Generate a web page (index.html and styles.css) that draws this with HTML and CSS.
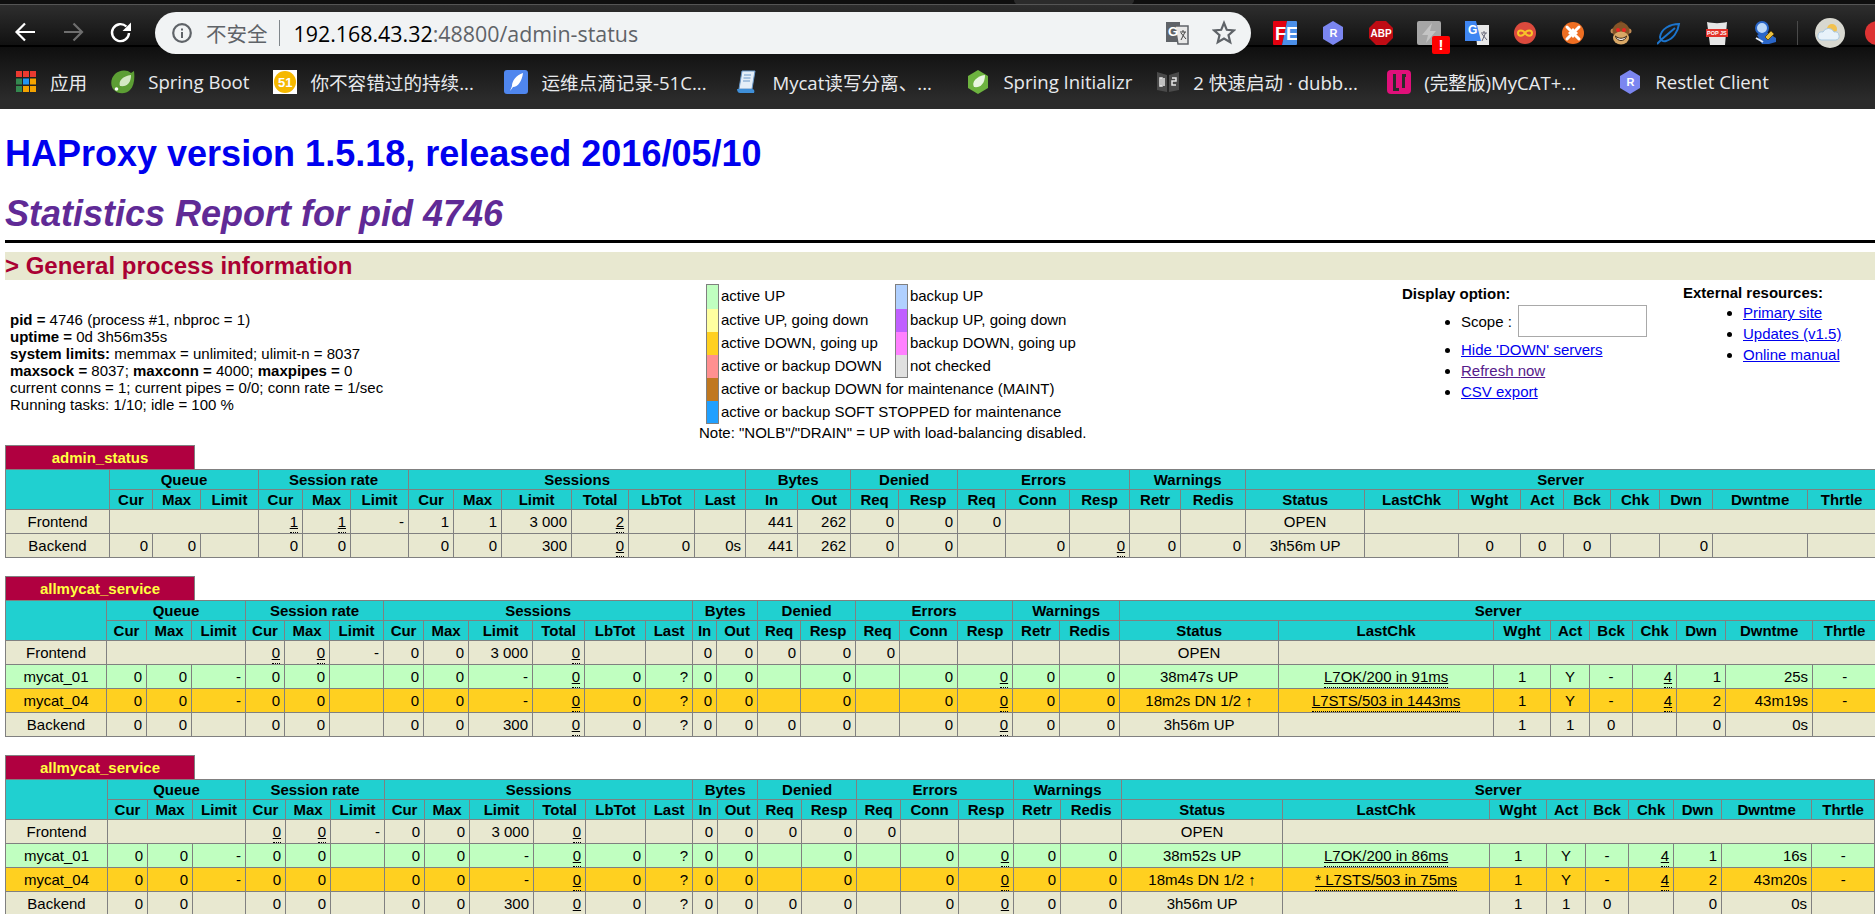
FILE: index.html
```html
<!DOCTYPE html>
<html lang="zh">
<head>
<meta charset="utf-8">
<title>Statistics Report for HAProxy</title>
<link rel="stylesheet" href="styles.css">
</head>
<body>
<header class="chrome">
  <div class="tabstrip"><span class="tabshape"></span></div>
  <div class="toolbar">
    <div class="nav">
      <svg class="navicon" viewBox="0 0 24 24"><path d="M22 12H4M12 3.500L3.500 12l8.500 8.500" fill="none" stroke="#fff" stroke-width="2.200"/></svg>
      <svg class="navicon" viewBox="0 0 24 24"><path d="M3 12h18M12.500 3.500L21 12l-8.500 8.500" fill="none" stroke="#6e6e6e" stroke-width="2.200"/></svg>
      <svg class="navicon" viewBox="0 0 24 24"><path d="M20 13a8.500 8.500 0 1 1-2.600-6.500" fill="none" stroke="#fff" stroke-width="2.400"/><path d="M22 2.500v8.500h-8.500z" fill="#fff"/></svg>
    </div>
    <div class="omnibox">
      <svg class="infoicon" viewBox="0 0 20 20"><circle cx="10" cy="10" r="8.800" fill="none" stroke="#5f6368" stroke-width="2.200"/><path d="M9 9h2v6H9zM9 5.500h2v2H9z" fill="#5f6368"/></svg>
      <span class="insecure">不安全</span>
      <span class="omnisep"></span>
      <span class="url"><b>192.168.43.32</b>:48800/admin-status</span>
      <span class="omnispace"></span>
      <svg class="omniicon" viewBox="0 0 24 26"><path d="M1 2h14v20H1z" fill="#5f6368"/><path d="M10 6h13v18H13z" fill="#e8e8e8" stroke="#5f6368" stroke-width="1.500"/><text x="3" y="16" class="gtext">G</text><path d="M15 12h6M18 10v2M16 20l4-8M16 13l5 6" stroke="#444" fill="none"/></svg>
      <svg class="omniicon star" viewBox="0 0 24 26"><path d="M12 3l2.800 6.800 7.200.6-5.500 4.800 1.700 7.100-6.200-3.800-6.200 3.800 1.700-7.100L2 10.400l7.200-.6z" fill="none" stroke="#5f6368" stroke-width="2.200"/></svg>
    </div>
    <div class="exts">
      <svg class="ext" viewBox="0 0 24 24"><path d="M1 0h13l-5 24H1a1 1 0 0 1-1-1V1a1 1 0 0 1 1-1z" fill="#e3000f"/><path d="M14 0h9a1 1 0 0 1 1 1v22a1 1 0 0 1-1 1H9z" fill="#4b8fe8"/><text x="2" y="18.500" class="fe">FE</text></svg>
      <svg class="ext" viewBox="0 0 24 24"><path d="M12 0l10 6v12l-10 6-10-6V6z" fill="#7b86f0"/><text x="8.500" y="16" class="extr">R</text></svg>
      <svg class="ext" viewBox="0 0 24 24"><path d="M7 0h10l7 7v10l-7 7H7l-7-7V7z" fill="#bf0c14"/><text x="1.500" y="16" class="abp">ABP</text></svg>
      <span class="extwrap">
        <svg class="ext" viewBox="0 0 24 24"><rect width="24" height="24" rx="2" fill="#a6a6a6"/><path d="M15 2L5 14h6l-2 8 10-12h-6z" fill="#c4c4c4"/></svg>
        <span class="extbadge">!</span>
      </span>
      <svg class="ext" viewBox="0 0 24 24"><path d="M10 4h14v20H12z" fill="#e8e8e8"/><path d="M0 0h11l5 20H0z" fill="#3f86f2"/><text x="3" y="13" class="gtext gsmall">G</text><path d="M16 12h6M19 10v2M17 20l3.500-8M17 13l5 6" stroke="#667" fill="none"/></svg>
      <svg class="ext" viewBox="0 0 24 24"><circle cx="12" cy="12" r="11" fill="#dc4a3d"/><path d="M12 12c-2-3.500-7-3.500-7 0s5 3.500 7 0c2-3.500 7-3.500 7 0s-5 3.500-7 0z" fill="none" stroke="#f8c32a" stroke-width="2"/></svg>
      <svg class="ext" viewBox="0 0 24 24"><circle cx="12" cy="12" r="11" fill="#ee6e22"/><path d="M12 7l5 5-5 5-5-5z" fill="#fff"/><path d="M6 6l3 3M18 6l-3 3M6 18l3-3M18 18l-3-3" stroke="#fff" stroke-width="3" stroke-linecap="round"/></svg>
      <svg class="ext" viewBox="0 0 24 24"><circle cx="4" cy="10" r="2.500" fill="#c08a55"/><circle cx="20" cy="10" r="2.500" fill="#c08a55"/><path d="M9 2l3-2 3 2z" fill="#6a3f1c"/><circle cx="12" cy="10" r="8.500" fill="#855427"/><ellipse cx="12" cy="17" rx="8" ry="6.500" fill="#d9a866"/><circle cx="9" cy="9" r="2" fill="#e22"/><circle cx="15" cy="9" r="2" fill="#e22"/><path d="M6.500 15c3 3 8 3 11 0-1 6-10 6-11 0z" fill="#fff" stroke="#3a2410"/></svg>
      <svg class="ext" viewBox="0 0 24 24"><path d="M22 3C13 3 4 8 3 16c0 3 3 5 6 4 7-2 12-9 13-17zM0 23l5-5M5 18L18 7" fill="none" stroke="#1c74cc" stroke-width="2"/></svg>
      <svg class="ext" viewBox="0 0 24 24"><path d="M2 1c6 1.500 14 1.500 20 0l-2 23H5z" fill="#e6e6e6"/><path d="M1 8h22v8H1z" fill="#e2332b"/><text x="2" y="14" class="popjs">POP JS</text></svg>
      <svg class="ext" viewBox="0 0 24 24"><path d="M4 14l8-4 11 7v4l-7 2H9z" fill="#2a66c8"/><circle cx="9" cy="7" r="6" fill="#bcd8f8" stroke="#2a66c8" stroke-width="2"/><path d="M12 16l6-6 3 3-6 6z" fill="#e8c040" stroke="#6a5010"/><path d="M3 17l7 4" stroke="#e8f0fa" stroke-width="2"/></svg>
      <span class="extsep"></span>
      <svg class="avatar" viewBox="0 0 30 30"><circle cx="15" cy="15" r="15" fill="#d8d8d0"/><circle cx="17" cy="11" r="5" fill="#f2c14e"/><path d="M6 22a4 4 0 0 1 2-8 6 6 0 0 1 11 0 4 4 0 0 1 2 8z" fill="#e8f2fa" stroke="#a8c8e0"/></svg>
      <svg class="ext lastext" viewBox="0 0 24 24"><circle cx="12" cy="12" r="12" fill="#d33"/><path d="M12 6v8M12 16v2" stroke="#fff" stroke-width="2"/></svg>
    </div>
  </div>
  <nav class="bookmarks">
    <a class="bm"><svg class="bmicon apps" viewBox="0 0 20 21"><g fill="#ea3a30"><rect width="6" height="6"/><rect x="7" width="6" height="6"/><rect x="14" width="6" height="6"/></g><rect y="7.500" width="6" height="6" fill="#34894f"/><rect x="7" y="7.500" width="6" height="6" fill="#2196f3"/><rect x="14" y="7.500" width="6" height="6" fill="#f4a300"/><rect y="15" width="6" height="6" fill="#34894f"/><rect x="7" y="15" width="6" height="6" fill="#f4a300"/><rect x="14" y="15" width="6" height="6" fill="#f4a300"/></svg>应用</a>
    <a class="bm"><svg class="bmicon" viewBox="0 0 24 24"><path d="M23 1c1 8 0 15-4 19-5 5-13 4-17-1C-1 14 0 8 4 4c4-4 12-5 16-1z" fill="#5c9e34"/><path d="M20 5c0 8-4 12-11 11-2-5 3-10 11-11z" fill="#d4e8c4"/><circle cx="5.500" cy="19" r="1.800" fill="#fff"/></svg>Spring Boot</a>
    <a class="bm fixed"><svg class="bmicon" viewBox="0 0 24 24"><rect width="24" height="24" fill="#fff"/><circle cx="12" cy="12" r="11" fill="#f5b800"/><text x="5" y="17" class="fifty">51</text></svg>你不容错过的持续...</a>
    <a class="bm fixed"><svg class="bmicon" viewBox="0 0 24 24"><rect width="24" height="24" rx="3" fill="#4f86ee"/><path d="M19 3c-7 2-11 8-11 13l-2 5 3-4c5 0 9-6 10-14z" fill="#fff"/></svg>运维点滴记录-51C...</a>
    <a class="bm fixed"><svg class="bmicon" viewBox="0 0 24 24"><path d="M7 1h13l-3 18H4z" fill="#e4eef8" stroke="#6a98c8"/><path d="M9 5h7M8.500 8h7M8 11h7" stroke="#6a98c8"/><path d="M2 19h15c2 0 3 2 2 4H5c-2 0-3-2-3-4z" fill="#3f8fd8"/></svg>Mycat读写分离、...</a>
    <a class="bm"><svg class="bmicon" viewBox="0 0 24 24"><path d="M12 0l10 6v12l-10 6-10-6V6z" fill="#6db33f"/><path d="M19 5c0 9-5 13-11 12-3-5 3-11 11-12z" fill="#e8f5e0"/></svg>Spring Initializr</a>
    <a class="bm fixed"><svg class="bmicon" viewBox="0 0 24 24"><path d="M1 2l10 3v17L1 20zM23 2L13 5v17l10-2z" fill="#4a4a4a"/><path d="M4 8h2v8H4zM8 8v8M16 8h4v3h-4v4h4" stroke="#e8e8e8" stroke-width="1.500" fill="none"/></svg>2 快速启动 · dubb...</a>
    <a class="bm fixed"><svg class="bmicon" viewBox="0 0 24 24"><rect width="24" height="24" rx="4" fill="#e0107a"/><path d="M6 4h3v14h3v3H6zM15 4h4v3h-1v11h-3z" fill="#2a2a2a"/></svg>(完整版)MyCAT+...</a>
    <a class="bm"><svg class="bmicon" viewBox="0 0 24 24"><path d="M12 0l10 6v12l-10 6-10-6V6z" fill="#7b86f0"/><text x="8.500" y="16" class="extr">R</text></svg>Restlet Client</a>
  </nav>
</header>

<main class="page">
  <h1>HAProxy version 1.5.18, released 2016/05/10</h1>
  <h2>Statistics Report for pid 4746</h2>
  <hr class="rule">
  <h3>&gt; General process information</h3>

  <section class="general">
    <p class="procinfo">
      <b>pid = </b>4746 (process #1, nbproc = 1)<br>
      <b>uptime = </b>0d 3h56m35s<br>
      <b>system limits:</b> memmax = unlimited; ulimit-n = 8037<br>
      <b>maxsock = </b>8037; <b>maxconn = </b>4000; <b>maxpipes = </b>0<br>
      current conns = 1; current pipes = 0/0; conn rate = 1/sec<br>
      Running tasks: 1/10; idle = 100 %
    </p>
    <div class="legendwrap">
      <table class="legend">
        <tr class="lg1"><td class="sw active4"></td><td class="lgt">active UP</td><td class="sw backup4"></td><td>backup UP</td></tr>
        <tr><td class="sw active3"></td><td class="lgt">active UP, going down</td><td class="sw backup3"></td><td>backup UP, going down</td></tr>
        <tr><td class="sw active2"></td><td class="lgt">active DOWN, going up</td><td class="sw backup2"></td><td>backup DOWN, going up</td></tr>
        <tr><td class="sw active0"></td><td class="lgt">active or backup DOWN</td><td class="sw nocheck"></td><td>not checked</td></tr>
        <tr><td class="sw maint"></td><td colspan="3">active or backup DOWN for maintenance (MAINT)</td></tr>
        <tr><td class="sw soft"></td><td colspan="3">active or backup SOFT STOPPED for maintenance</td></tr>
      </table>
      <p class="note">Note: "NOLB"/"DRAIN" = UP with load-balancing disabled.</p>
    </div>
    <div class="display">
      <b>Display option:</b>
      <ul>
        <li class="scope">Scope : <input class="scopein" type="text"></li>
        <li><a href="#">Hide 'DOWN' servers</a></li>
        <li><a href="#" class="visited">Refresh now</a></li>
        <li><a href="#">CSV export</a></li>
      </ul>
    </div>
    <div class="external">
      <b>External resources:</b>
      <ul>
        <li><a href="#">Primary site</a></li>
        <li><a href="#">Updates (v1.5)</a></li>
        <li><a href="#">Online manual</a></li>
      </ul>
    </div>
  </section>

  <div class="px">admin_status</div>
  <table class="stats">
    <colgroup><col width="104"><col width="43"><col width="48"><col width="58"><col width="44"><col width="48"><col width="58"><col width="45"><col width="48"><col width="70"><col width="57"><col width="66"><col width="51"><col width="52"><col width="53"><col width="48"><col width="59"><col width="48"><col width="64"><col width="60"><col width="51"><col width="65"><col width="119"><col width="94"><col width="62"><col width="43"><col width="47"><col width="49"><col width="53"><col width="95"><col width="68"></colgroup>
    <tr class="titre"><th rowspan="2"></th><th colspan="3">Queue</th><th colspan="3">Session rate</th><th colspan="6">Sessions</th><th colspan="2">Bytes</th><th colspan="2">Denied</th><th colspan="3">Errors</th><th colspan="2">Warnings</th><th colspan="9">Server</th></tr>
    <tr class="titre"><th>Cur</th><th>Max</th><th>Limit</th><th>Cur</th><th>Max</th><th>Limit</th><th>Cur</th><th>Max</th><th>Limit</th><th>Total</th><th>LbTot</th><th>Last</th><th>In</th><th>Out</th><th>Req</th><th>Resp</th><th>Req</th><th>Conn</th><th>Resp</th><th>Retr</th><th>Redis</th><th>Status</th><th>LastChk</th><th>Wght</th><th>Act</th><th>Bck</th><th>Chk</th><th>Dwn</th><th>Dwntme</th><th>Thrtle</th></tr>
    <tr class="frontend"><td class="ac">Frontend</td><td colspan="3"></td><td><u>1</u></td><td><u>1</u></td><td>-</td><td>1</td><td>1</td><td>3 000</td><td><u>2</u></td><td></td><td></td><td>441</td><td>262</td><td>0</td><td>0</td><td>0</td><td></td><td></td><td></td><td></td><td class="ac">OPEN</td><td colspan="8"></td></tr>
    <tr class="backend"><td class="ac">Backend</td><td>0</td><td>0</td><td></td><td>0</td><td>0</td><td></td><td>0</td><td>0</td><td>300</td><td><u>0</u></td><td>0</td><td>0s</td><td>441</td><td>262</td><td>0</td><td>0</td><td></td><td>0</td><td><u>0</u></td><td>0</td><td>0</td><td class="ac">3h56m UP</td><td></td><td class="ac">0</td><td class="ac">0</td><td class="ac">0</td><td></td><td>0</td><td></td><td></td></tr>
  </table>

  <div class="px">allmycat_service</div>
  <table class="stats">
    <colgroup><col width="101"><col width="40"><col width="45"><col width="54"><col width="39"><col width="45"><col width="54"><col width="40"><col width="45"><col width="64"><col width="52"><col width="61"><col width="47"><col width="24"><col width="41"><col width="43"><col width="55"><col width="44"><col width="58"><col width="55"><col width="47"><col width="60"><col width="159"><col width="215"><col width="57"><col width="39"><col width="43"><col width="44"><col width="49"><col width="87"><col width="64"></colgroup>
    <tr class="titre"><th rowspan="2"></th><th colspan="3">Queue</th><th colspan="3">Session rate</th><th colspan="6">Sessions</th><th colspan="2">Bytes</th><th colspan="2">Denied</th><th colspan="3">Errors</th><th colspan="2">Warnings</th><th colspan="9">Server</th></tr>
    <tr class="titre"><th>Cur</th><th>Max</th><th>Limit</th><th>Cur</th><th>Max</th><th>Limit</th><th>Cur</th><th>Max</th><th>Limit</th><th>Total</th><th>LbTot</th><th>Last</th><th>In</th><th>Out</th><th>Req</th><th>Resp</th><th>Req</th><th>Conn</th><th>Resp</th><th>Retr</th><th>Redis</th><th>Status</th><th>LastChk</th><th>Wght</th><th>Act</th><th>Bck</th><th>Chk</th><th>Dwn</th><th>Dwntme</th><th>Thrtle</th></tr>
    <tr class="frontend"><td class="ac">Frontend</td><td colspan="3"></td><td><u>0</u></td><td><u>0</u></td><td>-</td><td>0</td><td>0</td><td>3 000</td><td><u>0</u></td><td></td><td></td><td>0</td><td>0</td><td>0</td><td>0</td><td>0</td><td></td><td></td><td></td><td></td><td class="ac">OPEN</td><td colspan="8"></td></tr>
    <tr class="active4"><td class="ac">mycat_01</td><td>0</td><td>0</td><td>-</td><td>0</td><td>0</td><td></td><td>0</td><td>0</td><td>-</td><td><u>0</u></td><td>0</td><td>?</td><td>0</td><td>0</td><td></td><td>0</td><td></td><td>0</td><td><u>0</u></td><td>0</td><td>0</td><td class="ac">38m47s UP</td><td class="ac"><u>L7OK/200 in 91ms</u></td><td class="ac">1</td><td class="ac">Y</td><td class="ac">-</td><td><u>4</u></td><td>1</td><td>25s</td><td class="ac">-</td></tr>
    <tr class="active2"><td class="ac">mycat_04</td><td>0</td><td>0</td><td>-</td><td>0</td><td>0</td><td></td><td>0</td><td>0</td><td>-</td><td><u>0</u></td><td>0</td><td>?</td><td>0</td><td>0</td><td></td><td>0</td><td></td><td>0</td><td><u>0</u></td><td>0</td><td>0</td><td class="ac">18m2s DN 1/2 ↑</td><td class="ac"><u>L7STS/503 in 1443ms</u></td><td class="ac">1</td><td class="ac">Y</td><td class="ac">-</td><td><u>4</u></td><td>2</td><td>43m19s</td><td class="ac">-</td></tr>
    <tr class="backend"><td class="ac">Backend</td><td>0</td><td>0</td><td></td><td>0</td><td>0</td><td></td><td>0</td><td>0</td><td>300</td><td><u>0</u></td><td>0</td><td>?</td><td>0</td><td>0</td><td>0</td><td>0</td><td></td><td>0</td><td><u>0</u></td><td>0</td><td>0</td><td class="ac">3h56m UP</td><td></td><td class="ac">1</td><td class="ac">1</td><td class="ac">0</td><td></td><td>0</td><td>0s</td><td></td></tr>
  </table>

  <div class="px">allmycat_service</div>
  <table class="stats">
    <colgroup><col width="102"><col width="40"><col width="45"><col width="53"><col width="40"><col width="45"><col width="54"><col width="40"><col width="45"><col width="64"><col width="52"><col width="60"><col width="47"><col width="25"><col width="40"><col width="44"><col width="55"><col width="44"><col width="58"><col width="55"><col width="47"><col width="61"><col width="161"><col width="207"><col width="57"><col width="39"><col width="43"><col width="45"><col width="48"><col width="90"><col width="63"></colgroup>
    <tr class="titre"><th rowspan="2"></th><th colspan="3">Queue</th><th colspan="3">Session rate</th><th colspan="6">Sessions</th><th colspan="2">Bytes</th><th colspan="2">Denied</th><th colspan="3">Errors</th><th colspan="2">Warnings</th><th colspan="9">Server</th></tr>
    <tr class="titre"><th>Cur</th><th>Max</th><th>Limit</th><th>Cur</th><th>Max</th><th>Limit</th><th>Cur</th><th>Max</th><th>Limit</th><th>Total</th><th>LbTot</th><th>Last</th><th>In</th><th>Out</th><th>Req</th><th>Resp</th><th>Req</th><th>Conn</th><th>Resp</th><th>Retr</th><th>Redis</th><th>Status</th><th>LastChk</th><th>Wght</th><th>Act</th><th>Bck</th><th>Chk</th><th>Dwn</th><th>Dwntme</th><th>Thrtle</th></tr>
    <tr class="frontend"><td class="ac">Frontend</td><td colspan="3"></td><td><u>0</u></td><td><u>0</u></td><td>-</td><td>0</td><td>0</td><td>3 000</td><td><u>0</u></td><td></td><td></td><td>0</td><td>0</td><td>0</td><td>0</td><td>0</td><td></td><td></td><td></td><td></td><td class="ac">OPEN</td><td colspan="8"></td></tr>
    <tr class="active4"><td class="ac">mycat_01</td><td>0</td><td>0</td><td>-</td><td>0</td><td>0</td><td></td><td>0</td><td>0</td><td>-</td><td><u>0</u></td><td>0</td><td>?</td><td>0</td><td>0</td><td></td><td>0</td><td></td><td>0</td><td><u>0</u></td><td>0</td><td>0</td><td class="ac">38m52s UP</td><td class="ac"><u>L7OK/200 in 86ms</u></td><td class="ac">1</td><td class="ac">Y</td><td class="ac">-</td><td><u>4</u></td><td>1</td><td>16s</td><td class="ac">-</td></tr>
    <tr class="active2"><td class="ac">mycat_04</td><td>0</td><td>0</td><td>-</td><td>0</td><td>0</td><td></td><td>0</td><td>0</td><td>-</td><td><u>0</u></td><td>0</td><td>?</td><td>0</td><td>0</td><td></td><td>0</td><td></td><td>0</td><td><u>0</u></td><td>0</td><td>0</td><td class="ac">18m4s DN 1/2 ↑</td><td class="ac"><u>* L7STS/503 in 75ms</u></td><td class="ac">1</td><td class="ac">Y</td><td class="ac">-</td><td><u>4</u></td><td>2</td><td>43m20s</td><td class="ac">-</td></tr>
    <tr class="backend"><td class="ac">Backend</td><td>0</td><td>0</td><td></td><td>0</td><td>0</td><td></td><td>0</td><td>0</td><td>300</td><td><u>0</u></td><td>0</td><td>?</td><td>0</td><td>0</td><td>0</td><td>0</td><td></td><td>0</td><td><u>0</u></td><td>0</td><td>0</td><td class="ac">3h56m UP</td><td></td><td class="ac">1</td><td class="ac">1</td><td class="ac">0</td><td></td><td>0</td><td>0s</td><td></td></tr>
  </table>
</main>
</body>
</html>
```
FILE: styles.css
```css
* { box-sizing: border-box; }
html, body { margin: 0; padding: 0; height: 914px; overflow: hidden; background: #fff; }
body { font-family: "Liberation Sans", Arial, sans-serif; font-size: 15px; color: #000; }

/* browser chrome */
.chrome { height: 109px; font-family: "Open Sans", "Noto Sans CJK SC", sans-serif; }
.tabstrip { height: 5px; background: #0f0f0f; border-bottom: 1px solid #555; position: relative; overflow: hidden; }
.tabshape { position: absolute; left: 1014px; top: 0; width: 120px; height: 5px; background: #2b2b2b; border-radius: 0 0 8px 8px; }
.toolbar { height: 42px; background: linear-gradient(#2e2e2e, #111); border-bottom: 2px solid #000; display: flex; align-items: flex-start; position: relative; z-index: 1; }
.nav { display: flex; gap: 24px; width: 155px; padding: 15px 0 0 13px; flex: none; }
.navicon { width: 24px; height: 24px; flex: none; }
.omnibox { width: 1096px; height: 42px; margin-top: 7px; background: #f1f3f4; border-radius: 21px; display: flex; align-items: center; padding: 0 15px 0 17px; flex: none; }
.infoicon { width: 20px; height: 20px; flex: none; }
.insecure { font-size: 20.500px; color: #5f6368; margin-left: 14px; font-family: "Noto Sans CJK SC", sans-serif; line-height: 30px; }
.omnisep { width: 1px; height: 26px; background: #80868b; margin: 0 14px 0 11px; flex: none; }
.url { font-size: 21.400px; color: #5f6368; font-family: "Open Sans", sans-serif; white-space: nowrap; }
.url b { color: #000; font-weight: 400; }
.omnispace { flex: 1; }
.omniicon { width: 24px; height: 26px; flex: none; }
.star { margin-left: 23px; }
.gtext { font: bold 13px "Liberation Sans", sans-serif; fill: #fff; }
.gsmall { font-size: 12px; }
.exts { display: flex; align-items: center; gap: 24px; padding: 13px 0 0 22px; flex: none; }
.ext { width: 24px; height: 24px; flex: none; display: block; }
.extwrap { position: relative; width: 24px; height: 24px; flex: none; }
.extbadge { position: absolute; left: 15px; top: 15px; width: 18px; height: 18px; background: #f00; color: #fff; border-radius: 2px; font: bold 15px/18px "Liberation Sans", sans-serif; text-align: center; }
.extsep { width: 1px; height: 24px; background: #4a4a4a; margin-left: -4px; flex: none; }
.avatar { width: 30px; height: 30px; flex: none; margin-left: -7px; }
.lastext { margin-left: -4px; }
.fe { font: bold 18px "Liberation Sans", sans-serif; fill: #fff; }
.extr { font: bold 11px "Liberation Sans", sans-serif; fill: #fff; }
.abp { font: bold 10px "Liberation Sans", sans-serif; fill: #fff; }
.popjs { font: bold 5.500px "Liberation Sans", sans-serif; fill: #fff; }
.fifty { font: bold 13px "Liberation Sans", sans-serif; fill: #fff; }
.bookmarks { height: 62px; background: linear-gradient(#0f0f0f, #2b2b2b 85%); display: flex; align-items: center; padding: 7px 0 0 16px; gap: 24px; color: #e8eaed; font-size: 18.600px; white-space: nowrap; }
.bm { display: flex; align-items: center; gap: 13px; color: #e8eaed; text-decoration: none; flex: none; }
.bm.fixed { width: 207px; }
.bmicon { width: 24px; height: 24px; flex: none; }
.apps { width: 20px; height: 21px; margin-right: 1px; }

/* page */
.page { padding-left: 5px; }
h1 { font-size: 36px; line-height: 40px; color: #0000ee; margin: 0; padding: 25px 0 0; font-weight: bold; white-space: nowrap; }
h2 { font-size: 36px; line-height: 40px; font-style: italic; font-weight: bold; color: #602a96; margin: 20px 0 0; white-space: nowrap; }
.rule { height: 3px; background: #000; border: 0; margin: 6px 0 9px; }
h3 { font-size: 24px; line-height: 28px; height: 28px; margin: 0; background: #e8e8d0; color: #aa0033; font-weight: bold; white-space: nowrap; }

.general { height: 165px; display: grid; grid-template-columns: 694px 703px 281px 1fr; }
.procinfo { margin: 0; padding: 31px 0 0 5px; line-height: 17px; font-size: 15px; }
.legendwrap { padding-top: 4px; font-size: 15px; }
.legend { border-collapse: collapse; margin-left: 7px; }
.legend td { padding: 0 4px 2px 2px; height: 23px; line-height: 17px; white-space: nowrap; }
.legend .lg1 td { height: 24px; }
.legend .sw { width: 12px; min-width: 12px; padding: 0; border: 1px solid #808080; border-top: 0; border-bottom: 0; }
.legend .lg1 .sw { border-top: 1px solid #808080; }
.legend tr:nth-child(6) .sw { border-bottom: 1px solid #808080; }
.legend tr:nth-child(4) td:nth-child(3) { border-bottom: 1px solid #808080; }
.legend td.lgt { padding-right: 13px; }
.note { margin: 0; line-height: 17px; white-space: nowrap; }
.display, .external { line-height: 17px; font-size: 15px; white-space: nowrap; }
.display { padding-top: 5px; }
.external { padding-top: 4px; }
.display ul { margin: 0; padding: 2px 0 0 59px; }
.display li { height: 21px; line-height: 21px; }
.display li.scope { height: 35px; line-height: 35px; }
.scopein { width: 129px; height: 32px; margin: 0 0 4px 2px; padding: 0; border: 1px solid #a9a9a9; background: #fff; vertical-align: middle; }
.external ul { margin: 0; padding: 1px 0 0 60px; }
.external li { height: 21px; line-height: 21px; }
a { color: #0000ee; text-decoration: underline; }
a.visited { color: #551a8b; }

/* stats */
.px { width: 190px; height: 24px; line-height: 23px; background: #b00040; color: #ffff40; font-weight: bold; font-size: 15px; text-align: center; border: 1px solid #808080; border-bottom: 0; }
.stats { width: 1870px; table-layout: fixed; border-collapse: collapse; margin-bottom: 18px; font-size: 15px; }
.stats th, .stats td { border: 1px solid #808080; padding: 0 4px 0 2px; overflow: hidden; white-space: nowrap; }
.stats th { height: 20px; line-height: 18px; font-weight: bold; text-align: center; padding: 0; }
.stats td { height: 24px; line-height: 18px; text-align: right; }
.stats td.ac { text-align: center; padding: 0 2px; }
.titre { background: #20d0d0; }
.frontend, .backend { background: #e8e8d0; }
.active4 { background: #c0ffc0; }
.active3 { background: #ffffa0; }
.active2 { background: #ffd020; }
.active0 { background: #ff9090; }
.backup4 { background: #b0d0ff; }
.backup3 { background: #c060ff; }
.backup2 { background: #ff80ff; }
.nocheck { background: #e0e0e0; }
.maint { background: #c07820; }
.soft { background: #20a0ff; }
u { text-decoration: underline; border-bottom: 1px dotted #000; padding-bottom: 2px; }
```
